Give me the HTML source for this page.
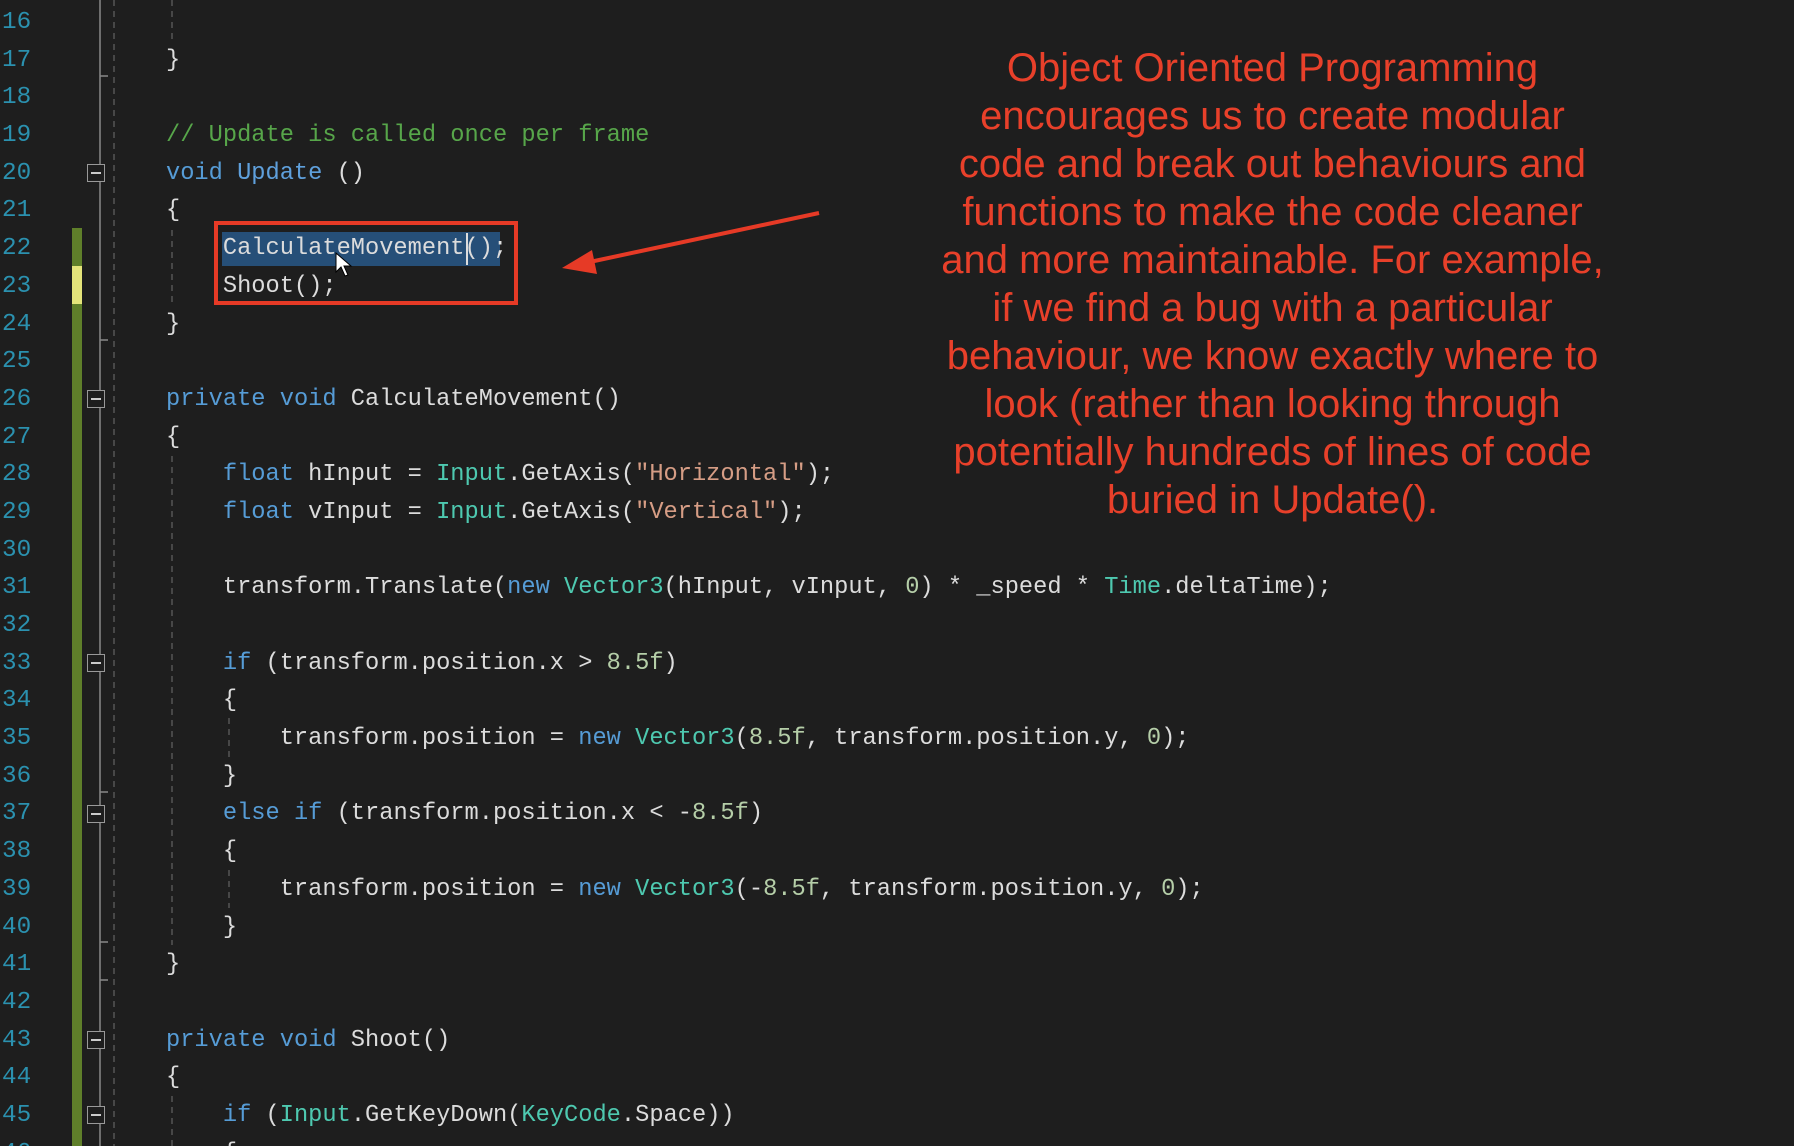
<!DOCTYPE html>
<html><head><meta charset="utf-8"><style>
html,body{margin:0;padding:0;background:#1e1e1e;width:1794px;height:1146px;overflow:hidden;position:relative}
.ln{position:absolute;left:2px;font:24.3px/37.68px "Liberation Mono",monospace;color:#2b91af}
.c{position:absolute;left:166px;font:23.7px/37.68px "Liberation Mono",monospace;color:#dcdcdc;white-space:pre}
.k{color:#569cd6}.t{color:#4ec9b0}.s{color:#d69d85}.cm{color:#57a64a}.n{color:#b5cea8}.u{color:#5fa0dc}
.box{position:absolute;left:87px;width:16px;height:16px;border:1.5px solid #999;background:#1e1e1e}
.box:after{content:"";position:absolute;left:3px;right:3px;top:7px;height:2px;background:#ccc}
.ann{position:absolute;left:830px;width:885px;top:44px;text-align:center;font:40px/48px "Liberation Sans",Arial,sans-serif;color:#e8402a}
</style></head><body>
<svg width="1794" height="1146" style="position:absolute;left:0;top:0">
<rect x="72" y="228" width="10" height="918" fill="#5f7f2a"/>
<rect x="72" y="266" width="10" height="38" fill="#e4e47a"/>
<line x1="100" y1="0" x2="100" y2="1146" stroke="#888" stroke-width="1.5"/>
<g stroke="#888" stroke-width="1.5">
<line x1="100" y1="76" x2="108" y2="76"/><line x1="100" y1="340" x2="108" y2="340"/>
<line x1="100" y1="792" x2="108" y2="792"/><line x1="100" y1="942" x2="108" y2="942"/><line x1="100" y1="980" x2="108" y2="980"/>
</g>
<line x1="114" y1="0" x2="114" y2="1146" stroke="#555" stroke-width="1.5" stroke-dasharray="6,5"/>
<g stroke="#555" stroke-width="1.5" stroke-dasharray="6,5">
<line x1="172" y1="0" x2="172" y2="40"/>
<line x1="172" y1="230" x2="172" y2="305"/>
<line x1="172" y1="456" x2="172" y2="945"/>
<line x1="229" y1="718" x2="229" y2="758"/>
<line x1="229" y1="870" x2="229" y2="908"/>
<line x1="172" y1="1096" x2="172" y2="1146"/>
</g>
<rect x="216" y="223" width="300" height="80" fill="none" stroke="#e63a26" stroke-width="4"/>
<line x1="819" y1="213" x2="585" y2="263" stroke="#e63a26" stroke-width="4"/>
<polygon points="562,268 592,250 597,274" fill="#e63a26"/>
</svg>
<div style="position:absolute;left:222px;top:232px;width:278px;height:34px;background:#264f78"></div>
<div style="position:absolute;left:466px;top:233px;width:2px;height:32px;background:#ddd"></div>
<svg width="20" height="28" style="position:absolute;left:335px;top:252px"><path d="M1 1 L1 20 L6 15 L10 24 L13 23 L9 14 L16 14 Z" fill="#fff" stroke="#000" stroke-width="1"/></svg>
<div class="box" style="top:164px"></div><div class="box" style="top:390px"></div><div class="box" style="top:654px"></div>
<div class="box" style="top:805px"></div><div class="box" style="top:1031px"></div><div class="box" style="top:1106px"></div>
<div class="ln" style="top:4px">16<br>17<br>18<br>19<br>20<br>21<br>22<br>23<br>24<br>25<br>26<br>27<br>28<br>29<br>30<br>31<br>32<br>33<br>34<br>35<br>36<br>37<br>38<br>39<br>40<br>41<br>42<br>43<br>44<br>45<br>46</div>
<div class="c" style="top:4px">
}

<span class="cm">// Update is called once per frame</span>
<span class="k">void</span> <span class="u">Update</span> ()
{
    CalculateMovement();
    Shoot();
}

<span class="k">private</span> <span class="k">void</span> CalculateMovement()
{
    <span class="k">float</span> hInput = <span class="t">Input</span>.GetAxis(<span class="s">"Horizontal"</span>);
    <span class="k">float</span> vInput = <span class="t">Input</span>.GetAxis(<span class="s">"Vertical"</span>);

    transform.Translate(<span class="k">new</span> <span class="t">Vector3</span>(hInput, vInput, <span class="n">0</span>) * _speed * <span class="t">Time</span>.deltaTime);

    <span class="k">if</span> (transform.position.x &gt; <span class="n">8.5f</span>)
    {
        transform.position = <span class="k">new</span> <span class="t">Vector3</span>(<span class="n">8.5f</span>, transform.position.y, <span class="n">0</span>);
    }
    <span class="k">else</span> <span class="k">if</span> (transform.position.x &lt; -<span class="n">8.5f</span>)
    {
        transform.position = <span class="k">new</span> <span class="t">Vector3</span>(-<span class="n">8.5f</span>, transform.position.y, <span class="n">0</span>);
    }
}

<span class="k">private</span> <span class="k">void</span> Shoot()
{
    <span class="k">if</span> (<span class="t">Input</span>.GetKeyDown(<span class="t">KeyCode</span>.Space))
    {
</div>
<div class="ann">Object Oriented Programming<br>encourages us to create modular<br>code and break out behaviours and<br>functions to make the code cleaner<br>and more maintainable. For example,<br>if we find a bug with a particular<br>behaviour, we know exactly where to<br>look (rather than looking through<br>potentially hundreds of lines of code<br>buried in Update().</div>
</body></html>
